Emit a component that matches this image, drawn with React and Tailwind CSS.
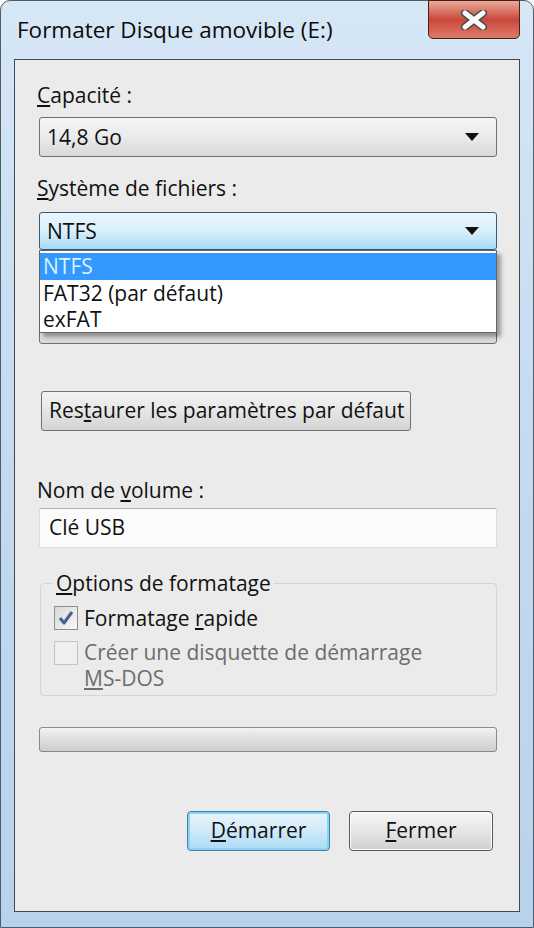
import React from 'react';

const font = { fontFamily: '"Open Sans", "Noto Sans", sans-serif' };

// small down triangle used by the combo boxes
const Arrow = () => (
  <svg width="14" height="8" viewBox="0 0 14 8" className="shrink-0">
    <path d="M0 0 H14 L7 8 Z" fill="#111" />
  </svg>
);

const Combo = ({ value, focused, tall, children }) => (
  <div
    className={
      'relative w-[458px] rounded-[3px] border flex items-center pl-[7px] pr-[17px] ' +
      (tall ? 'h-[40px] ' : 'h-[38px] ') +
      (focused
        ? 'border-[#2f5c80] bg-gradient-to-b from-[#eaf6fd] via-[#d9f0fc] to-[#a7d9f5]'
        : 'border-[#707070] bg-gradient-to-b from-[#f4f4f4] via-[#ebebeb] to-[#d9d9d9]')
    }
  >
    <span className="flex-1 text-[21px] leading-none text-[#111]">{value}</span>
    <Arrow />
    {children}
  </div>
);

const Check = ({ checked, disabled }) => (
  <div
    className={
      'w-[24px] h-[24px] border flex items-center justify-center shrink-0 ' +
      (disabled
        ? 'border-[#c4c4c4] bg-[#efefef]'
        : 'border-[#8e8f8f] bg-gradient-to-br from-[#d8d8d8] to-[#f8f8f8]')
    }
  >
    {checked && (
      <svg width="16" height="16" viewBox="0 0 16 16">
        <path d="M2 8 L6 13 L14 2" fill="none" stroke="#4a5f97" strokeWidth="3" strokeLinejoin="round" />
      </svg>
    )}
  </div>
);

export default function App() {
  return (
    <div className="w-[534px] h-[928px] bg-white overflow-hidden" style={font}>
      {/* window frame */}
      <div className="w-[534px] h-[928px] rounded-t-[10px] border border-[#4f5d6b] bg-gradient-to-b from-[#d6e7f6] via-[#c3daf0] to-[#b9d2eb] px-[13px] pb-[15px] flex flex-col">
        {/* title bar */}
        <div className="h-[58px] flex items-start relative">
          <div className="pt-[14px] pl-[3px] text-[22.5px] leading-[30px] text-[#0b0b0b]">
            Formater Disque amovible (E:)
          </div>
          <div className="absolute right-[0px] top-[-1px] w-[92px] h-[39px] rounded-b-[5px] border border-[#4b1e1a] bg-gradient-to-b from-[#e9aa9a] via-[#c9473c] to-[#dd7a68] flex items-center justify-center">
            <svg width="30" height="20" viewBox="0 0 30 20">
              <path d="M6 3 L24 17 M24 3 L6 17" stroke="#4c4c4c" strokeWidth="8" strokeLinecap="round" />
              <path d="M6 3 L24 17 M24 3 L6 17" stroke="#fafafa" strokeWidth="5" strokeLinecap="round" />
            </svg>
          </div>
        </div>

        {/* client area */}
        <div className="flex-1 border border-[#3e4a55] bg-[#ebebeb] pl-[24px] pt-[23px] flex flex-col text-[#111]">
          <div className="-ml-[2px] h-[24px] text-[21px] leading-[24px]">
            <u className="underline-offset-2">C</u>apacité :
          </div>
          <div className="mt-[10px]">
            <Combo value="14,8 Go" tall />
          </div>

          <div className="-ml-[2px] mt-[19px] h-[24px] text-[21px] leading-[24px]">
            <u className="underline-offset-2">S</u>ystème de fichiers :
          </div>
          <div className="mt-[12px] relative z-10">
            <Combo value="NTFS" focused>
              {/* open drop-down list */}
              <div className="absolute left-[-1px] top-[37px] w-[458px] h-[83px] bg-white border border-[#646464] shadow-[4px_4px_4px_rgba(0,0,0,0.35)] pt-[2px] text-[21px]">
                <div className="h-[27px] bg-[#3399ff] text-[#dff0ff] pl-[3px] leading-[27px]">NTFS</div>
                <div className="h-[26px] pl-[3px] leading-[26px]">FAT32 (par défaut)</div>
                <div className="h-[26px] pl-[3px] leading-[26px]">exFAT</div>
              </div>
            </Combo>
          </div>

          {/* label and combo hidden under the open list */}
          <div className="mt-[20px] h-[24px]" />
          <div className="mt-[12px]">
            <Combo value="" />
          </div>

          <button className="mt-[47px] ml-[2px] w-[370px] h-[40px] rounded-[3px] border border-[#707070] bg-gradient-to-b from-[#f3f3f3] via-[#e6e6e6] to-[#d3d3d3] text-[21px] text-left pl-[7px] text-[#111] whitespace-nowrap">
            Res<u className="underline-offset-2">t</u>aurer les paramètres par défaut
          </button>

          <div className="-ml-[2px] mt-[47px] h-[24px] text-[21px] leading-[24px]">
            Nom de <u className="underline-offset-2">v</u>olume :
          </div>
          <div className="mt-[6px] w-[458px] h-[40px] border border-[#dcdcdc] border-t-[#b4b4b4] rounded-[2px] bg-[#fbfbfb] flex items-center pl-[9px] text-[21px]">
            Clé USB
          </div>

          {/* options group */}
          <div className="mt-[35px] ml-[1px] w-[457px] h-[113px] rounded-[4px] border border-[#d2d6da] relative pl-[13px] pt-[22px]">
            <div className="absolute left-[12px] top-[-14px] px-[3px] bg-[#ebebeb] text-[21px] leading-[26px]">
              <u className="underline-offset-2">O</u>ptions de formatage
            </div>
            <div className="flex items-center gap-[6px] h-[24px]">
              <Check checked />
              <span className="text-[21px] leading-[24px]">
                Formatage <u className="underline-offset-2">r</u>apide
              </span>
            </div>
            <div className="flex items-start gap-[6px] mt-[11px]">
              <Check disabled />
              <span className="text-[21px] leading-[26px] text-[#6d6d6d] -mt-[2px]">
                Créer une disquette de démarrage
                <br />
                <u className="underline-offset-2">M</u>S-DOS
              </span>
            </div>
          </div>

          {/* progress bar */}
          <div className="mt-[31px] w-[458px] h-[25px] rounded-[3px] border border-[#8a8a8a] bg-gradient-to-b from-[#f2f2f2] via-[#dedede] to-[#cdcdcd]" />

          {/* dialog buttons */}
          <div className="mt-[59px] flex gap-[19px] pl-[148px]">
            <button className="w-[143px] h-[40px] rounded-[4px] border border-[#3c7fb1] bg-gradient-to-b from-[#eaf6fd] via-[#cfe9f7] to-[#a9dbf6] shadow-[inset_0_0_0_2px_#8fd3f4] text-[21px] text-[#111]">
              <u className="underline-offset-2">D</u>émarrer
            </button>
            <button className="w-[144px] h-[40px] rounded-[4px] border border-[#5a5a5a] bg-gradient-to-b from-[#f6f6f6] via-[#e6e6e6] to-[#cfcfcf] shadow-[inset_0_0_0_1px_#fcfcfc] text-[21px] text-[#111]">
              <u className="underline-offset-2">F</u>ermer
            </button>
          </div>
        </div>
      </div>
    </div>
  );
}
